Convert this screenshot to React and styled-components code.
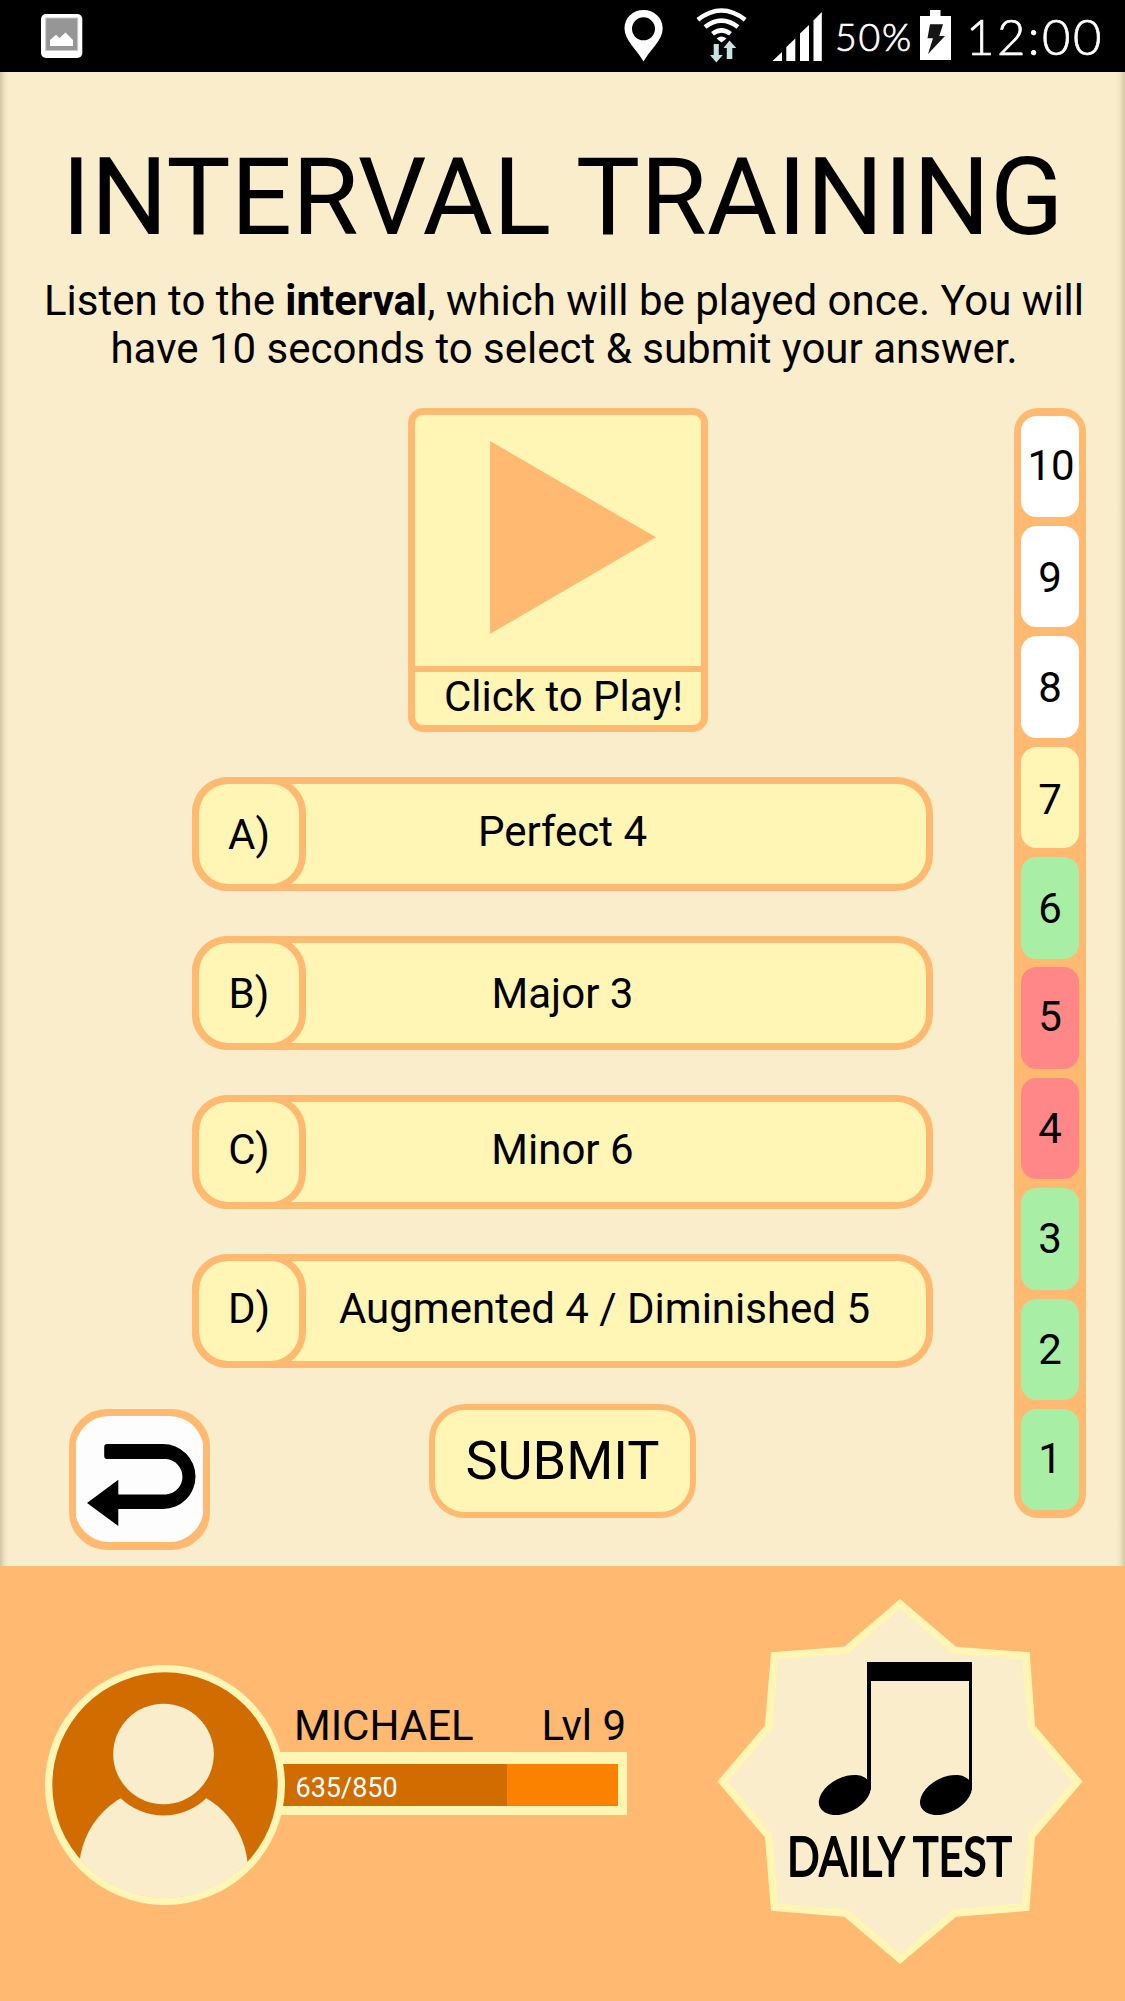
import React from "react";
import styled, { createGlobalStyle } from "styled-components";

const c = {
  cream: "#faedcb",
  yellow: "#fff6b5",
  orange: "#ffb970",
  dark: "#d16c00",
  bright: "#fb8200",
  green: "#a9eea5",
  red: "#ff8787",
  white: "#ffffff",
};

const Global = createGlobalStyle`
  * { box-sizing: border-box; }
  body { margin: 0; background: ${c.cream}; }
  button { font: inherit; color: inherit; padding: 0; }
`;

const Screen = styled.div`
  width: 1125px;
  height: 2001px;
  display: flex;
  flex-direction: column;
  overflow: hidden;
  background: ${c.cream};
  color: #000;
  font-family: Roboto, "Liberation Sans", sans-serif;
  font-size: 42px;
  line-height: 48px;
`;

const StatusBar = styled.header`
  display: flex;
  flex: none;
  height: 72px;
  padding-left: 40px;
  background: #000;
  color: #fff;
  font-family: Lato, "Open Sans", sans-serif;
  font-weight: 300;
  -webkit-text-stroke: 0.7px #fff;
`;

const StatusIcons = styled.div`
  display: flex;
  margin-left: auto;
  width: 505px;
`;

const StatusSvg = styled.svg`
  display: block;
  flex: none;
  height: 72px;
  width: ${(p) => p.$w}px;
  margin-left: ${(p) => p.$gap || 0}px;
`;

const Percent = styled.span`
  width: 80px;
  margin-left: 11px;
  margin-right: 1px;
  font-size: 37.5px;
  line-height: 74px;
  letter-spacing: 1.8px;
  white-space: nowrap;
`;

const Clock = styled.span`
  margin-left: 14px;
  font-size: 49px;
  line-height: 73px;
  letter-spacing: 2.5px;
  white-space: nowrap;
`;

const Main = styled.main`
  height: 1494px;
  flex: none;
  padding-top: 70px;
  background:
    linear-gradient(to right, rgba(70, 60, 20, 0.22), rgba(70, 60, 20, 0.05) 5px, transparent 9px),
    linear-gradient(to left, rgba(70, 60, 20, 0.22), rgba(70, 60, 20, 0.05) 5px, transparent 9px);
`;

const Title = styled.h1`
  margin: 0;
  font-weight: 400;
  font-size: 108px;
  line-height: 111px;
  height: 110px;
  text-align: center;
  white-space: nowrap;
`;

const Intro = styled.p`
  margin: 25px 0 0;
  padding-left: 3px;
  text-align: center;
  white-space: nowrap;
`;

const Body = styled.div`
  display: flex;
  margin-top: 35px;
  padding-left: 69px;
`;

const Quiz = styled.section`
  width: 864px;
  display: flex;
  flex-direction: column;
`;

const PlayButton = styled.button`
  width: 300px;
  height: 324px;
  margin-left: 339px;
  border: 7px solid ${c.orange};
  border-radius: 15px;
  background: ${c.yellow};
  display: flex;
  flex-direction: column;
  overflow: hidden;
`;

const PlayArt = styled.svg`
  display: block;
  width: 286px;
  height: 251px;
`;

const PlayLabel = styled.span`
  width: 100%;
  height: 59px;
  border-top: 6px solid ${c.orange};
  padding-left: 11px;
  text-align: center;
  line-height: 50px;
  white-space: nowrap;
`;

const Options = styled.div`
  display: flex;
  flex-direction: column;
  gap: 45px;
  margin: 45px 0 0 123px;
`;

const Option = styled.button`
  display: flex;
  width: 741px;
  height: 114px;
  border: 0;
  border-radius: 36px;
  background: ${c.yellow};
  box-shadow: inset 0 0 0 7px ${c.orange};
`;

const OptionKey = styled.span`
  width: 114px;
  height: 114px;
  flex: none;
  border: 7px solid ${c.orange};
  border-radius: 36px;
  line-height: ${(p) => 100 + p.$nudge * 2}px;
  text-align: center;
`;

const OptionText = styled.span`
  flex: 1;
  height: 114px;
  line-height: ${(p) => 116 + p.$nudge * 2}px;
  padding-right: ${(p) => (p.$wide ? 30 : 114)}px;
  text-align: center;
  white-space: nowrap;
`;

const Actions = styled.div`
  display: flex;
  margin-top: 36px;
`;

const BackButton = styled.button`
  width: 141px;
  height: 141px;
  margin-top: 5px;
  border: 7px solid ${c.orange};
  border-radius: 38px;
  background: ${c.orange};
`;

const BackArt = styled.svg`
  display: block;
  width: 127px;
  height: 127px;
`;

const Submit = styled.button`
  width: 267px;
  height: 114px;
  margin-left: 219px;
  border: 6px solid ${c.orange};
  border-radius: 36px;
  background: ${c.yellow};
  font-size: 54px;
  line-height: 102px;
`;

const Progress = styled.ol`
  width: 72px;
  height: 1110px;
  margin: 0 0 0 81px;
  padding: 7.5px 7px;
  list-style: none;
  display: flex;
  flex-direction: column;
  justify-content: space-between;
  border-radius: 24px;
  background: ${c.orange};
`;

const Step = styled.li`
  height: 101.6px;
  border-radius: 15.5px;
  background: ${(p) => p.$fill};
  line-height: ${(p) => 101 + p.$nudge * 2}px;
  padding-left: ${(p) => (p.$wide ? 2 : 0)}px;
  text-align: center;
`;

const Footer = styled.footer`
  flex: 1;
  display: flex;
  background: ${c.orange};
`;

const Profile = styled.section`
  display: flex;
  padding: 99px 0 0 45px;
`;

const Avatar = styled.svg`
  display: block;
  width: 240px;
  height: 240px;
  position: relative;
  z-index: 1;
`;

const Stats = styled.div`
  width: 350px;
  margin-left: -8px;
  padding-top: 37px;
`;

const NameRow = styled.div`
  display: flex;
  justify-content: space-between;
  height: 50px;
  padding: 0 1px 0 17px;
  white-space: nowrap;
`;

const Bar = styled.div`
  height: 63px;
  padding: 12px 9px 9px 0;
  background: ${c.yellow};
`;

const BarTrack = styled.div`
  height: 42px;
  background: ${c.bright};
`;

const BarFill = styled.div`
  width: 230px;
  height: 42px;
  padding-left: 18.5px;
  background: ${c.dark};
  color: #fff;
  font-size: 27px;
  line-height: 48px;
`;

const DailyTest = styled.svg`
  display: block;
  width: 400px;
  height: 400px;
  margin: 14px 25px 0 auto;
`;

const DailyLabel = styled.text`
  font-family: Lato, "Open Sans", sans-serif;
  font-weight: 400;
  font-size: 55px;
  stroke: #000;
  stroke-width: 1.8px;
  stroke-linejoin: round;
`;

const options = [
  { key: "A)", text: "Perfect 4", k: 0.5, t: -3 },
  { key: "B)", text: "Major 3", k: 0.5, t: 0 },
  { key: "C)", text: "Minor 6", k: -2.5, t: -3 },
  { key: "D)", text: "Augmented 4 / Diminished 5", k: -2.5, t: -3, wide: true },
];

const steps = [
  [10, c.white, -1],
  [9, c.white, 1],
  [8, c.white, 1],
  [7, c.yellow, 2],
  [6, c.green, 1],
  [5, c.red, -1],
  [4, c.red, 0],
  [3, c.green, 0],
  [2, c.green, 0],
  [1, c.green, -0.5],
];

const GalleryIcon = () => (
  <StatusSvg $w={43} viewBox="40 0 43 72">
    <rect x="41" y="14" width="41.3" height="44" rx="5" fill="#fff" />
    <rect x="45.7" y="18" width="32" height="32.5" fill="#969696" stroke="#c5cac9" strokeWidth="1" />
    <path d="M50 46V40L56 34.8L59.5 38L65.5 32.5L73 40V46Z" fill="#fff" />
  </StatusSvg>
);

const PinIcon = () => (
  <StatusSvg $w={44} viewBox="620 0 44 72">
    <path
      fillRule="evenodd"
      fill="#fff"
      d="M643.5 61.5C637 50 624.5 40 624.5 28.5C624.5 17.5 633 10 643.5 10S662.7 17.5 662.7 28.5C662.7 40 650 50 643.5 61.5ZM643.5 17.3A11.5 11.5 0 1 0 643.5 40.3A11.5 11.5 0 1 0 643.5 17.3Z"
    />
  </StatusSvg>
);

const WifiIcon = () => (
  <StatusSvg $w={56} $gap={30} viewBox="694 0 56 72">
    <g fill="none" stroke="#fff" strokeWidth="4.6">
      <path d="M697.8 19.8Q721.5 1.2 745.2 19.8" />
      <path d="M705 27Q721.5 14.2 738 27" />
      <path d="M712.5 33.8Q721.5 26.8 730.5 33.8" />
    </g>
    <path d="M716.5 38.5Q721.5 34.5 726.5 38.5L721.5 42.5Z" fill="#fff" />
    <path d="M713.7 44H718.8V55H722.8L716.3 62.6L710 55H713.7Z" fill="#c9e1e3" />
    <path d="M726.8 59H732.3V48H736.3L729.5 40.5L723.5 48H726.8Z" fill="#c9e1e3" />
  </StatusSvg>
);

const SignalIcon = () => (
  <StatusSvg $w={52} $gap={22} viewBox="772 0 52 72">
    <g fill="#fff">
      <path d="M772.5 61L782 52V61Z" />
      <path d="M786.3 61V47L795.3 38.5V61Z" />
      <path d="M800 61V33.5L809 25V61Z" />
      <path d="M813.5 61V20.5L821.8 12V61Z" />
    </g>
  </StatusSvg>
);

const BatteryIcon = () => (
  <StatusSvg $w={32} $gap={4} viewBox="920 0 32 72">
    <path d="M920 16H930V10H940.5V16H951V60H920Z" fill="#fff" />
    <path d="M930 24.3H943L939.3 36H945L928 54L933 38.3H927.5Z" fill="#151515" />
  </StatusSvg>
);

const starOuter =
  "900,1599 956,1646.7 1029.7,1652.3 1035,1725.7 1082.6,1781.5 1035,1837.3 1029.3,1910.8 956,1916.7 900,1964 844.3,1916.7 771,1910.8 765,1837.3 717.4,1781.5 765,1725.7 771,1652.3 844.3,1646.7";
const starInner =
  "900,1609 953.3,1653.8 1022.3,1659.4 1028,1728.8 1072.6,1781.5 1028,1834.4 1022.3,1903.6 953.3,1909.2 900,1954.2 847.5,1909.2 778,1903.6 772.3,1834.4 727.6,1781.5 772.3,1728.8 778,1659.4 847.5,1653.8";

export default function App() {
  return (
    <Screen>
      <Global />
      <StatusBar>
        <GalleryIcon />
        <StatusIcons>
          <PinIcon />
          <WifiIcon />
          <SignalIcon />
          <Percent>50%</Percent>
          <BatteryIcon />
          <Clock>12:00</Clock>
        </StatusIcons>
      </StatusBar>
      <Main>
        <Title>INTERVAL TRAINING</Title>
        <Intro>
          Listen to the <b>interval</b>, which will be played once. You will
          <br />
          have 10 seconds to select &amp; submit your answer.
        </Intro>
        <Body>
          <Quiz>
            <PlayButton>
              <PlayArt viewBox="415 415 286 251">
                <path d="M490 441L656 537.3L490 634Z" fill={c.orange} />
              </PlayArt>
              <PlayLabel>Click to Play!</PlayLabel>
            </PlayButton>
            <Options>
              {options.map((o) => (
                <Option key={o.key}>
                  <OptionKey $nudge={o.k}>{o.key}</OptionKey>
                  <OptionText $nudge={o.t} $wide={o.wide}>
                    {o.text}
                  </OptionText>
                </Option>
              ))}
            </Options>
            <Actions>
              <BackButton aria-label="Back">
                <BackArt viewBox="76 1416 127 127">
                  <rect x="75" y="1416" width="128.5" height="126" rx="34" fill="#fdfdfd" />
                  <path
                    fill="#000"
                    d="M107 1444H163A32.3 32.3 0 0 1 163 1509H118.3V1526L87 1503L118.3 1479.7V1494.5H166A17.8 17.8 0 0 0 166 1459H107Q104.2 1459 104.2 1456V1447Q104.2 1444 107 1444Z"
                  />
                </BackArt>
              </BackButton>
              <Submit>SUBMIT</Submit>
            </Actions>
          </Quiz>
          <Progress>
            {steps.map(([n, fill, nudge]) => (
              <Step key={n} $fill={fill} $nudge={nudge} $wide={n === 10}>
                {n}
              </Step>
            ))}
          </Progress>
        </Body>
      </Main>
      <Footer>
        <Profile>
          <Avatar viewBox="45 1665 240 240">
            <defs>
              <clipPath id="face">
                <circle cx="165" cy="1785" r="113" />
              </clipPath>
            </defs>
            <circle cx="165" cy="1785" r="120" fill={c.yellow} />
            <circle cx="165" cy="1785" r="112.7" fill={c.dark} />
            <g clipPath="url(#face)">
              <circle cx="163.5" cy="1871" r="84.5" fill={c.cream} />
              <rect x="79" y="1871" width="169" height="40" fill={c.cream} />
              <circle cx="163.5" cy="1754" r="61.5" fill={c.dark} />
              <circle cx="163.5" cy="1754" r="50.3" fill={c.cream} />
            </g>
          </Avatar>
          <Stats>
            <NameRow>
              <span>MICHAEL</span>
              <span>Lvl 9</span>
            </NameRow>
            <Bar>
              <BarTrack>
                <BarFill>635/850</BarFill>
              </BarTrack>
            </Bar>
          </Stats>
        </Profile>
        <DailyTest viewBox="700 1580 400 400">
          <polygon points={starOuter} fill={c.yellow} />
          <polygon points={starInner} fill={c.cream} />
          <path d="M867 1662H972V1790H969V1681H871V1790H867Z" />
          <ellipse cx="844.8" cy="1795" rx="27.8" ry="17.4" transform="rotate(-27 844.8 1795)" />
          <ellipse cx="946" cy="1795" rx="27.8" ry="17.4" transform="rotate(-27 946 1795)" />
          <DailyLabel x="787" y="1876" textLength="225" lengthAdjust="spacingAndGlyphs">
            DAILY TEST
          </DailyLabel>
        </DailyTest>
      </Footer>
    </Screen>
  );
}
